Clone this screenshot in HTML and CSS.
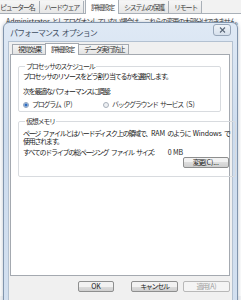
FILE: index.html
```html
<!DOCTYPE html>
<html lang="ja">
<head>
  <meta charset="UTF-8">
  <title>パフォーマンス オプション</title>
  <link rel="stylesheet" href="styles.css">
</head>
<body>
  <!-- background window: system properties -->
  <div class="bg-window">
    <div class="bg-tabs">
      <span class="bg-tab first">ピューター名</span>
      <span class="bg-tab">ハードウェア</span>
      <span class="bg-tab active">詳細設定</span>
      <span class="bg-tab">システムの保護</span>
      <span class="bg-tab">リモート</span>
    </div>
    <div class="bg-body">
      <p class="bg-text"><span class="en">Administrator</span> としてログオンしていない場合は、これらの変更の大部分はできません。</p>
    </div>
  </div>

  <!-- performance options dialog -->
  <div class="dialog">
    <div class="titlebar">
      <span class="title">パフォーマンス オプション</span>
      <span class="close-btn">
        <svg width="9" height="6" viewBox="0 0 9 6"><path d="M2 0.5 L7 5.5 M7 0.5 L2 5.5" stroke="#5a6778" stroke-width="1.1" fill="none"/></svg>
      </span>
    </div>
    <div class="client">
      <div class="tabs">
        <span class="tab">視覚効果</span>
        <span class="tab active">詳細設定</span>
        <span class="tab">データ実行防止</span>
      </div>
      <div class="panel">
        <fieldset class="group">
          <legend>プロセッサのスケジュール</legend>
          <p class="line">プロセッサのリソースをどう割り当てるかを選択します。</p>
          <p class="line gap">次を最適なパフォーマンスに調整:</p>
          <div class="radios">
            <label class="radio"><span class="dot checked"></span>プログラム<span class="en">(P)</span></label>
            <label class="radio"><span class="dot"></span>バックグラウンド サービス<span class="en">(S)</span></label>
          </div>
        </fieldset>
        <fieldset class="group vm">
          <legend>仮想メモリ</legend>
          <p class="line first nowrap">ページ ファイルとはハードディスク上の領域で、<span class="en">RAM</span> のように <span class="en">Windows</span> で</p>
          <p class="line">使用されます。</p>
          <div class="size-row">
            <span>すべてのドライブの総ページング ファイル サイズ:</span>
            <span class="size en">0 MB</span>
          </div>
          <div class="change-row">
            <button class="btn">変更<span class="en">(C)...</span></button>
          </div>
        </fieldset>
      </div>
      <div class="buttons">
        <button class="btn ok en">OK</button>
        <button class="btn cancel">キャンセル</button>
        <button class="btn apply" disabled>適用<span class="en">(A)</span></button>
      </div>
    </div>
  </div>
</body>
</html>
```

FILE: styles.css
```css
body {
  margin: 0;
  width: 241px;
  height: 300px;
  overflow: hidden;
  position: relative;
  background: #ffffff;
  font-family: "Noto Sans CJK JP", "Noto Sans", sans-serif;
  font-size: 7px;
  letter-spacing: -1.25px;
  word-spacing: 2px;
  color: #1e1e1e;
}

p {
  margin: 0;
}

.en {
  letter-spacing: -0.1px;
  word-spacing: 0;
}

.nowrap {
  white-space: nowrap;
}

/* background window */
.bg-window {
  background: #f5f6f8;
  height: 300px;
}

.bg-tabs {
  display: flex;
  height: 13px;
  border-bottom: 1px solid #a9b0b8;
  background: #f2f2f2;
}

.bg-tab {
  padding: 0 4px 0 5px;
  line-height: 12px;
  border-right: 1px solid #a9b0b8;
  background: linear-gradient(#f6f6f6, #e6e6e6);
  color: #444;
  margin-top: 1px;
  white-space: nowrap;
}

.bg-tab.first {
  padding-left: 0;
}

.bg-tab.active {
  background: #ffffff;
  margin-top: 0;
  line-height: 14px;
  height: 14px;
  border-left: 1px solid #a9b0b8;
  margin-left: 1px;
}

.bg-body {
  background: #ffffff;
  height: 280px;
  padding: 2px 0 0 6px;
  overflow: hidden;
}

.bg-text {
  white-space: nowrap;
  color: #333;
}

/* dialog */
.dialog {
  position: absolute;
  left: 3px;
  top: 22px;
  width: 233px;
  height: 284px;
  border: 1px solid #8195ad;
  border-radius: 6px 6px 0 0;
  background: linear-gradient(#dfe9f5, #cddcee 40%, #d3e0f0);
  box-shadow: 0 0 4px rgba(60, 80, 110, 0.35);
}

.titlebar {
  display: flex;
  justify-content: space-between;
  align-items: center;
  height: 18px;
  padding: 0 6px 0 6px;
}

.title {
  color: #3f4f62;
  font-size: 8px;
  letter-spacing: -1px;
  word-spacing: 2px;
}

.close-btn {
  display: flex;
  align-items: center;
  justify-content: center;
  width: 16px;
  height: 10px;
  border: 1px solid #97a6b9;
  border-radius: 3px;
  background: linear-gradient(#f0f4f9, #d6e0ec);
  margin-top: -5px;
}

.client {
  margin: 0 4px;
  height: 262px;
  background: #f0f0f0;
  border: 1px solid #b3c1d1;
  padding: 2px 2px 0 1px;
}

.tabs {
  display: flex;
  padding-left: 2px;
  height: 10px;
  align-items: flex-end;
}

.tab {
  padding: 0 4px 0 5px;
  line-height: 9px;
  height: 9px;
  border: 1px solid #a4a9b0;
  border-bottom: none;
  border-left: none;
  background: linear-gradient(#f6f6f6, #e3e3e3);
  color: #333;
  white-space: nowrap;
}

.tab:first-child {
  border-left: 1px solid #a4a9b0;
}

.tab.active {
  background: #ffffff;
  height: 11px;
  line-height: 11px;
  margin-bottom: -1px;
  position: relative;
  border-left: 1px solid #a4a9b0;
  margin-left: -1px;
}

.panel {
  background: #ffffff;
  border: 1px solid #a4a9b0;
  height: 213px;
  padding: 7px 8px 0 7px;
  display: flex;
  flex-direction: column;
  gap: 5px;
}

.group {
  margin: 0;
  padding: 2px 5px 2px 4px;
  border: 1px solid #d8dbdf;
  border-radius: 2px;
}

.group.vm {
  padding-bottom: 8px;
}

.group legend {
  padding: 0 1px;
  margin-left: 2px;
  color: #333;
  line-height: 8px;
}

.line {
  line-height: 8px;
  color: #222;
}

.line.first {
  margin-top: 2px;
}

.line.gap {
  margin-top: 7px;
}

.radios {
  display: flex;
  margin-top: 5px;
  line-height: 9px;
}

.radio {
  display: flex;
  align-items: center;
  gap: 3px;
  width: 80px;
  color: #333;
  white-space: nowrap;
}

.dot {
  flex-shrink: 0;
  width: 4px;
  height: 4px;
  border-radius: 50%;
  border: 1px solid #a8b0ba;
  background: #eef0f3;
}

.dot.checked {
  background: radial-gradient(circle, #2f6ec2 45%, #c8d9ee 65%);
  border-color: #8ca0ba;
}

.size-row {
  display: flex;
  margin-top: 3px;
  line-height: 8px;
}

.size {
  margin-left: 14px;
}

.change-row {
  display: flex;
  justify-content: flex-end;
  margin-top: 1px;
  padding-right: 1px;
}

.btn {
  font-family: inherit;
  font-size: 7px;
  letter-spacing: -1.25px;
  height: 11px;
  padding: 0;
  border: 1px solid #8e8f8f;
  border-radius: 2px;
  background: linear-gradient(#f2f2f2 50%, #dddddd 50%, #cfcfcf);
  color: #222;
  line-height: 9px;
}

.btn.en {
  letter-spacing: -0.1px;
}

.change-row .btn {
  width: 46px;
}

.buttons {
  display: flex;
  padding: 5px 0 0 0;
  justify-content: flex-end;
}

.btn.ok {
  width: 36px;
  margin-right: 17px;
}

.btn.cancel {
  width: 47px;
  margin-right: 5px;
}

.btn.apply {
  width: 47px;
  color: #a0a0a0;
  border-color: #b8b8b8;
  background: #f4f4f4;
}
```
